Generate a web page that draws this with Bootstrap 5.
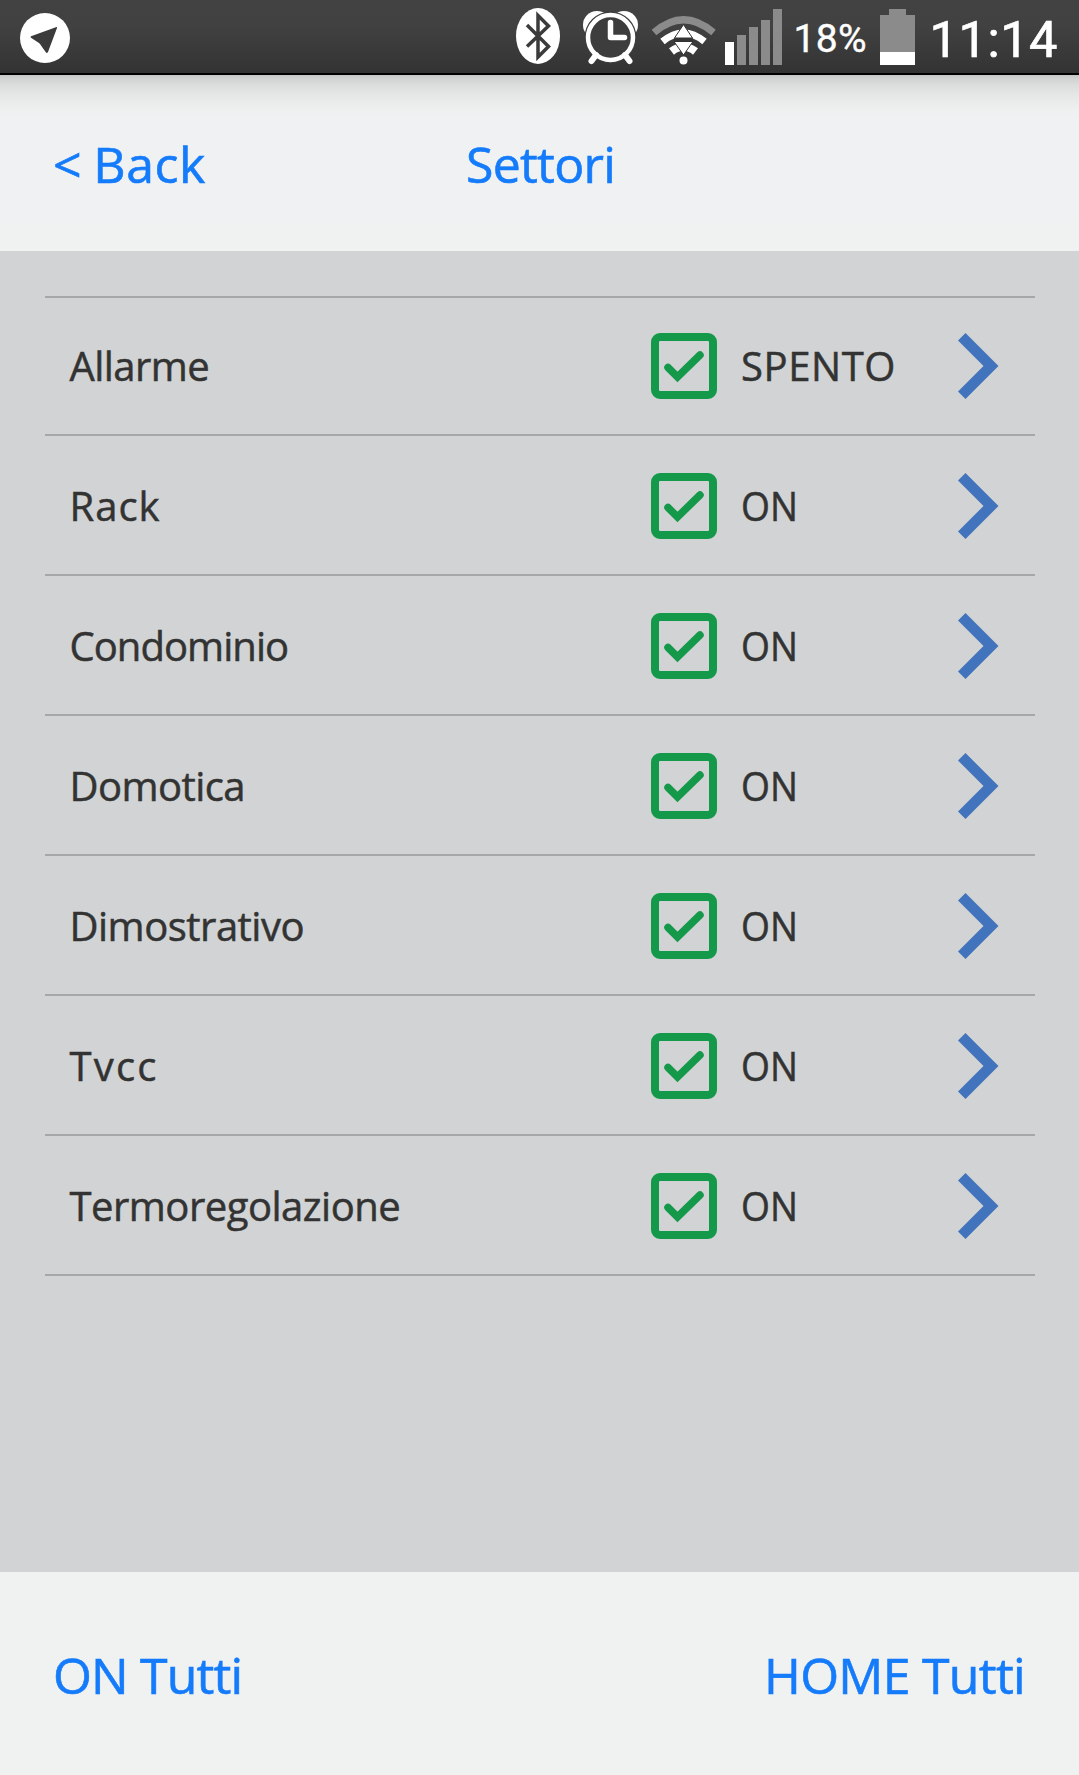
<!DOCTYPE html>
<html lang="it">
<head>
<meta charset="utf-8">
<meta name="viewport" content="width=device-width, initial-scale=1">
<title>Settori</title>
<link href="https://cdn.jsdelivr.net/npm/bootstrap@5.3.0/dist/css/bootstrap.min.css" rel="stylesheet">
<style>
body{font-family:"Open Sans","Noto Sans",sans-serif;background:#d1d3d4;color:#333;height:1775px;overflow:hidden}
.statusbar{height:75px;background:linear-gradient(#424242 0,#414141 35%,#333 100%);border-bottom:2px solid #000;color:#fff;font-family:Roboto,sans-serif;flex:none}
.statusbar svg{display:block;width:1079px;height:73px}
.topbar{height:176px;flex:none;background:linear-gradient(#c4c5c5 0,#cfd0d0 3px,#dcdddd 10px,#e6e7e7 21px,#eeefef 34px,#f0f1f2 42px,#f0f1f1 100%);padding:2px 53px 0}
.bottombar{height:203px;flex:none;background:#f0f1f1;padding:2px 54px 0 53px}
.topbar a,.bottombar a,.topbar h1{font-size:50px;line-height:60px;color:#147bfb;text-decoration:none;margin:0;font-weight:400;white-space:pre;-webkit-text-stroke:.6px #147bfb}
.sectors{margin:45px 44px 0 45px;border-top:2px solid #a5a7a9}
.sector{height:140px;border-bottom:2px solid #a5a7a9;padding:2px 36px 0 24.500px;font-size:40px;line-height:60px}
.sector:first-child{height:138px;padding-top:0}
.sector span{white-space:pre;-webkit-text-stroke:.5px #333}
.sector-name{width:581.500px}
.state-text{width:215px;padding-left:24px}
.narrow{transform:scaleX(.93);transform-origin:24px 0}
.sector svg{flex:none;display:block}
</style>
</head>
<body class="d-flex flex-column">
<svg class="d-none">
  <symbol id="check" viewBox="0 0 66 66"><rect x="4" y="4" width="58" height="58" rx="5" fill="none" stroke="#14994a" stroke-width="8"/><path d="M17 34.500l9.500 9.500 22.500-22" fill="none" stroke="#14994a" stroke-width="7.500" stroke-linecap="round" stroke-linejoin="miter"/></symbol>
  <symbol id="next" viewBox="0 0 41 66"><path d="M7.500 0L40.500 33 7.500 66 0 58.500 25.500 33 0 7.500Z" fill="#4274be"/></symbol>
</svg>
<div class="statusbar">
  <svg viewBox="0 0 1079 73">
    <circle cx="45" cy="38" r="25" fill="#fff"/>
    <path d="M56.500 27L31 36.200Q30 37 31 37.800L39 43Q40.500 44 41 45.500L46 52.500Q47 53.500 48 52L57 28Q57.200 26.800 56.500 27Z" fill="#3b3b3b"/>
    <ellipse cx="538" cy="36" rx="22" ry="28" fill="#fff"/>
    <path d="M527 25L548.500 46.500 538 57V15.500L548.500 26 527 46.500" fill="none" stroke="#3b3b3b" stroke-width="3.500"/>
    <g fill="#fff"><circle cx="597" cy="25" r="14"/><circle cx="624" cy="25" r="14"/></g>
    <circle cx="610.500" cy="37.500" r="26" fill="#3d3d3d"/>
    <circle cx="610.500" cy="37.500" r="22.500" fill="none" stroke="#fff" stroke-width="4.500"/>
    <path d="M596 55l-4.500 6M625 55l4.500 6" stroke="#fff" stroke-width="6" stroke-linecap="round"/>
    <path d="M610.500 22.500V37.500H624.500" fill="none" stroke="#fff" stroke-width="5.500" stroke-linecap="round" stroke-linejoin="round"/>
    <g fill="none">
      <path d="M654 32.500Q683.500 7 713.500 32.500" stroke="#8b8b8b" stroke-width="7"/>
      <path d="M662.500 41.500Q683.500 24.500 704.500 41.500" stroke="#fff" stroke-width="7"/>
      <path d="M671.500 51.500Q683.500 42 695.500 51.500" stroke="#fff" stroke-width="8"/>
    </g>
    <path d="M683.500 24.500L692.500 38H674.500ZM674 41.500H693L683.500 55Z" fill="#fff" stroke="#333" stroke-width="1"/>
    <path d="M674 39.500H693" stroke="#333" stroke-width="2.500"/>
    <circle cx="683.500" cy="60.500" r="4" fill="#fff"/>
    <path d="M725 42h9v23h-9z" fill="#fff"/>
    <path d="M737 35h9v30h-9zM749 27h9v38h-9zM761 20h9v45h-9zM773 9h9v56h-9z" fill="#8b8b8b"/>
    <text x="793.500" y="52" font-size="39" fill="#fff" stroke="#fff" stroke-width=".4" textLength="73">18%</text>
    <path d="M889 9h17v6h9v37h-35V15h9z" fill="#8b8b8b"/><path d="M880 52h35v13h-35z" fill="#fff"/>
    <text x="929.500" y="57" font-size="50.500" fill="#fff" stroke="#fff" stroke-width=".7" textLength="128">11:14</text>
  </svg>
</div>
<header class="topbar d-flex align-items-center">
  <a href="#" style="letter-spacing:.6px;word-spacing:-2.500px;width:413px">&lt; Back</a>
  <h1 style="letter-spacing:-.75px">Settori</h1>
</header>
<main class="flex-grow-1">
  <div class="sectors">
    <div class="sector d-flex align-items-center"><span class="sector-name" style="letter-spacing:-.55px">Allarme</span><svg width="66" height="66"><use href="#check"/></svg><span class="state-text" style="letter-spacing:.6px">SPENTO</span><svg class="ms-auto" width="41" height="66"><use href="#next"/></svg></div>
    <div class="sector d-flex align-items-center"><span class="sector-name" style="letter-spacing:1px">Rack</span><svg width="66" height="66"><use href="#check"/></svg><span class="state-text narrow">ON</span><svg class="ms-auto" width="41" height="66"><use href="#next"/></svg></div>
    <div class="sector d-flex align-items-center"><span class="sector-name" style="letter-spacing:-.95px">Condominio</span><svg width="66" height="66"><use href="#check"/></svg><span class="state-text narrow">ON</span><svg class="ms-auto" width="41" height="66"><use href="#next"/></svg></div>
    <div class="sector d-flex align-items-center"><span class="sector-name" style="letter-spacing:-.55px">Domotica</span><svg width="66" height="66"><use href="#check"/></svg><span class="state-text narrow">ON</span><svg class="ms-auto" width="41" height="66"><use href="#next"/></svg></div>
    <div class="sector d-flex align-items-center"><span class="sector-name" style="letter-spacing:-.5px">Dimostrativo</span><svg width="66" height="66"><use href="#check"/></svg><span class="state-text narrow">ON</span><svg class="ms-auto" width="41" height="66"><use href="#next"/></svg></div>
    <div class="sector d-flex align-items-center"><span class="sector-name" style="letter-spacing:2.200px">Tvcc</span><svg width="66" height="66"><use href="#check"/></svg><span class="state-text narrow">ON</span><svg class="ms-auto" width="41" height="66"><use href="#next"/></svg></div>
    <div class="sector d-flex align-items-center"><span class="sector-name" style="letter-spacing:-.5px">Termoregolazione</span><svg width="66" height="66"><use href="#check"/></svg><span class="state-text narrow">ON</span><svg class="ms-auto" width="41" height="66"><use href="#next"/></svg></div>
  </div>
</main>
<footer class="bottombar d-flex align-items-center justify-content-between">
  <a href="#" style="letter-spacing:-.85px">ON Tutti</a>
  <a href="#" style="letter-spacing:-.7px">HOME Tutti</a>
</footer>
<script src="https://cdn.jsdelivr.net/npm/bootstrap@5.3.0/dist/js/bootstrap.bundle.min.js"></script>
</body>
</html>
